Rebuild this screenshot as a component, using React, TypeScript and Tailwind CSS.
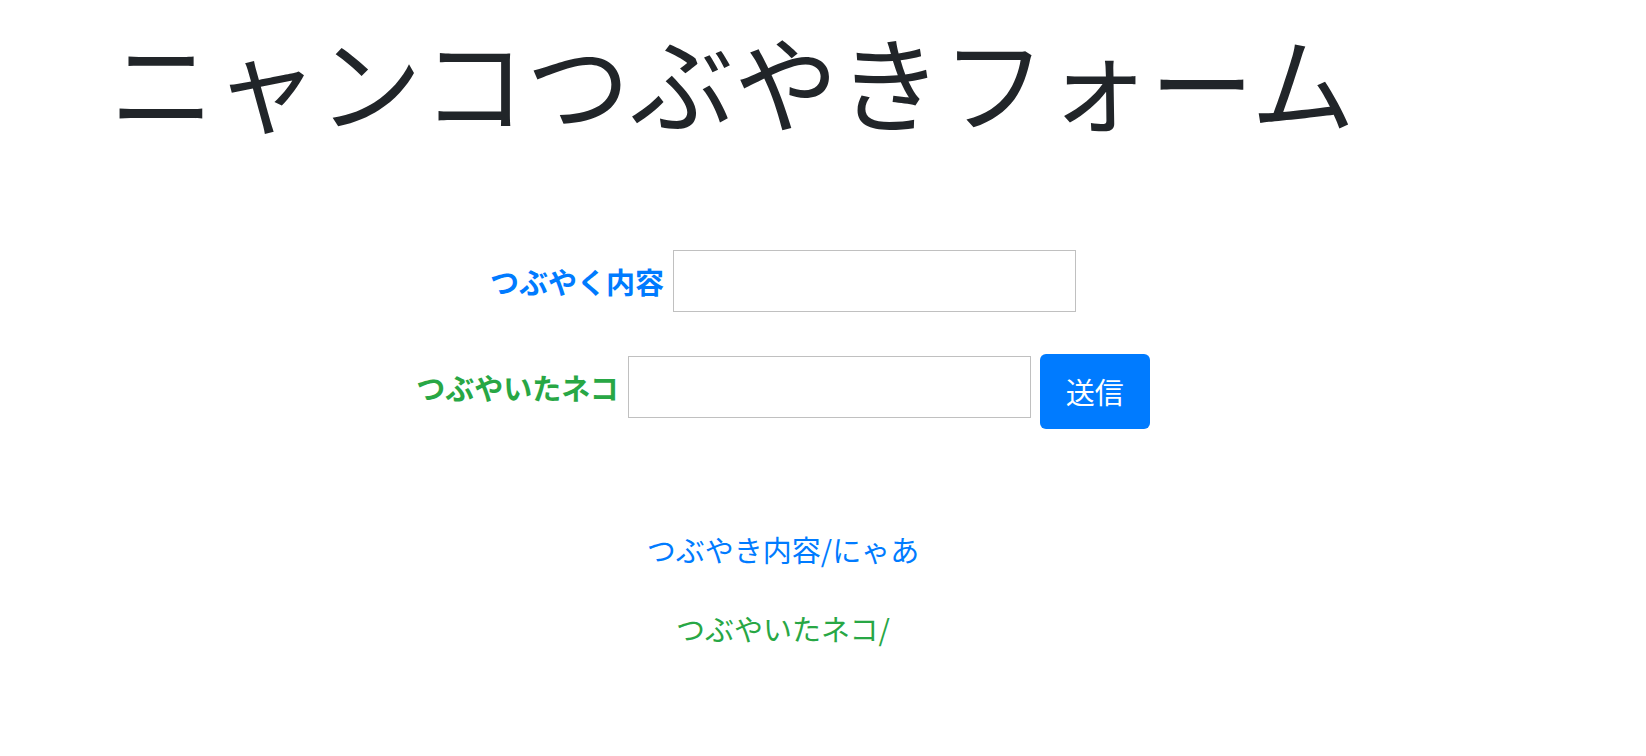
const FONT = "font-['Hiragino_Sans','Noto_Sans_CJK_JP',sans-serif]";

export default function App() {
  return (
    <div className={`w-[1566px] min-h-[756px] bg-white ${FONT}`}>
      {/* タイトル */}
      <h1 className="pt-[28px] pl-[110px] text-[104px] leading-[104px] font-normal text-[#212529] whitespace-nowrap">
        ニャンコつぶやきフォーム
      </h1>

      {/* フォーム */}
      <form className="flex flex-col items-center mt-[118px]" onSubmit={(e) => e.preventDefault()}>
        <div className="flex items-center gap-[9px]">
          <label className="text-[29px] leading-[40px] font-bold text-[#007bff]">つぶやく内容</label>
          <input type="text" className="w-[403px] h-[62px] border border-[#c0c0c0] bg-white outline-none" />
        </div>
        <div className="flex items-center gap-[9px] mt-[33px]">
          <label className="text-[29px] leading-[40px] font-bold text-[#28a745]">つぶやいたネコ</label>
          <input type="text" className="w-[403px] h-[62px] border border-[#c0c0c0] bg-white outline-none" />
          <button
            type="submit"
            className="mt-[9px] w-[110px] h-[75px] rounded-[6px] bg-[#007bff] text-white text-[29px]"
          >
            送信
          </button>
        </div>
      </form>

      {/* 結果 */}
      <div className="flex flex-col items-center">
        <p className="mt-[100px] text-[29px] leading-[40px] text-[#007bff]">つぶやき内容/にゃあ</p>
        <p className="mt-[39px] text-[29px] leading-[40px] text-[#28a745]">つぶやいたネコ/</p>
      </div>
    </div>
  );
}
